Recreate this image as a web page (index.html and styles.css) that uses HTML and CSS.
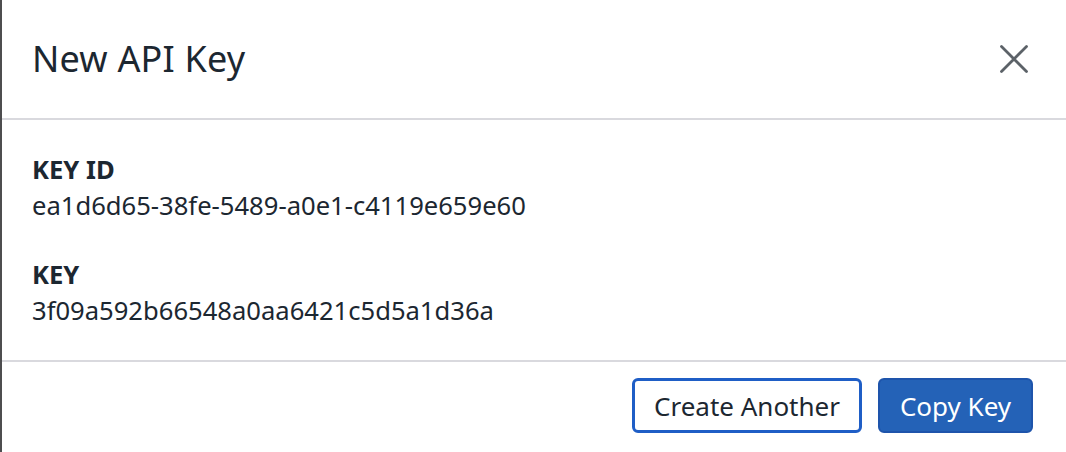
FILE: index.html
```html
<!DOCTYPE html>
<html lang="en">
<head>
<meta charset="utf-8">
<title>New API Key</title>
<link rel="stylesheet" href="styles.css">
</head>
<body>
<div class="modal">
  <header class="modal-header">
    <h1 class="modal-title">New API Key</h1>
    <button class="close-btn" aria-label="Close">
      <svg width="28" height="28" viewBox="0 0 28 28" aria-hidden="true">
        <path d="M1.5 1.5 L26.5 26.5 M26.5 1.5 L1.5 26.5" stroke="#5c6268" stroke-width="2.8" stroke-linecap="round" fill="none"/>
      </svg>
    </button>
  </header>
  <section class="modal-body">
    <div class="field">
      <div class="field-label">KEY ID</div>
      <div class="field-value">ea1d6d65-38fe-5489-a0e1-c4119e659e60</div>
    </div>
    <div class="field">
      <div class="field-label">KEY</div>
      <div class="field-value">3f09a592b66548a0aa6421c5d5a1d36a</div>
    </div>
  </section>
  <footer class="modal-footer">
    <button class="btn btn-secondary">Create Another</button>
    <button class="btn btn-primary">Copy Key</button>
  </footer>
</div>
</body>
</html>
```

FILE: styles.css
```css
html, body {
  margin: 0;
  padding: 0;
  background: #ffffff;
}

body {
  font-family: "Noto Sans", "Open Sans", "Liberation Sans", sans-serif;
  color: #1c2731;
}

.modal {
  height: 452px;
  border-left: 2px solid #4d4d4f;
  box-sizing: border-box;
  display: flex;
  flex-direction: column;
  overflow: hidden;
}

.modal-header {
  height: 118px;
  flex: none;
  display: flex;
  align-items: center;
  justify-content: space-between;
  padding: 0 38px 0 30px;
  border-bottom: 2px solid #d9d9de;
}

.modal-title {
  margin: 0;
  font-size: 36px;
  font-weight: 400;
  line-height: 1;
  letter-spacing: 0.2px;
}

.close-btn {
  border: 0;
  background: none;
  padding: 0;
  margin: 0;
  width: 28px;
  height: 28px;
  display: flex;
  cursor: pointer;
}

.modal-body {
  padding: 32px 30px 31px;
  display: flex;
  flex-direction: column;
  gap: 33px;
  border-bottom: 2px solid #d9d9de;
}

.field-label {
  font-size: 25.6px;
  font-weight: 700;
  line-height: 36px;
}

.field-value {
  font-size: 25.6px;
  font-weight: 400;
  line-height: 36px;
}

.modal-footer {
  display: flex;
  justify-content: flex-end;
  gap: 16px;
  padding: 16px 33px 0 0;
}

.btn {
  height: 55px;
  box-sizing: border-box;
  font-family: inherit;
  font-size: 26px;
  border-radius: 6px;
  padding: 0;
  cursor: pointer;
  display: flex;
  align-items: center;
  justify-content: center;
}

.btn-secondary {
  width: 230px;
  background: #ffffff;
  color: #1c2731;
  border: 3px solid #1f5ec6;
}

.btn-primary {
  width: 155px;
  background: #2462b7;
  color: #ffffff;
  border: 2px solid #1e54ab;
}
```
